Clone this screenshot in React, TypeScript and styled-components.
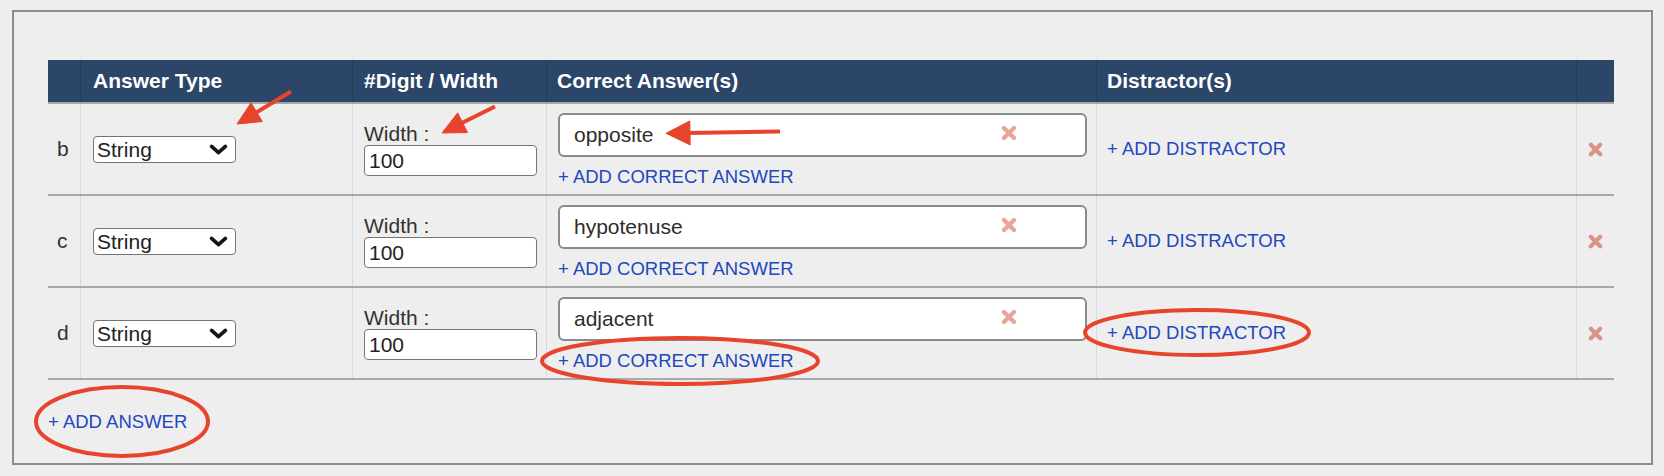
import React from 'react'
import styled, { createGlobalStyle } from 'styled-components'

type Answer = {
  id: string;
  label: string;
  type: string;
  width: string;
  correct: string[];
}

const answers: Answer[] = [
  { id: 'b', label: 'b', type: 'String', width: '100', correct: ['opposite'] },
  { id: 'c', label: 'c', type: 'String', width: '100', correct: ['hypotenuse'] },
  { id: 'd', label: 'd', type: 'String', width: '100', correct: ['adjacent'] },
]

const COLS = '33px 272px 194px 550px 480px 37px'
const MARK = '#e8432b'

const GlobalStyle = createGlobalStyle`
  html, body {
    margin: 0;
    padding: 0;
    background: #eeeeee;
  }
  body {
    font-family: "Liberation Sans", Arial, Helvetica, sans-serif;
    color: #333;
  }
  * {
    box-sizing: border-box;
  }
`

const Page = styled.div`
  position: relative;
  width: 1664px;
  height: 476px;
  padding: 10px 11px 0 12px;
  overflow: hidden;
`

const Panel = styled.section`
  border: 2px solid #8c8c8c;
  background: #eeeeee;
  padding: 48px 37px 30px 34px;
`

const Table = styled.div`
  width: 1566px;
`

const HeaderRow = styled.div`
  display: grid;
  grid-template-columns: ${COLS};
  height: 44px;
  background: #2b4669;
  border-bottom: 2px solid #a6a6a6;
`

const HeadCell = styled.div<{ $pl?: number }>`
  display: flex;
  align-items: center;
  padding: 0 10px 0 ${props => props.$pl ?? 11}px;
  color: #ffffff;
  font-weight: bold;
  font-size: 21px;
  border-right: 1px solid rgba(0, 0, 0, 0.14);

  &:last-child {
    border-right: none;
  }
`

const BodyRow = styled.div`
  display: grid;
  grid-template-columns: ${COLS};
  height: 92px;
  border-bottom: 2px solid #a9a9a9;
`

const Cell = styled.div<{ $top?: boolean; $center?: boolean; $pl?: number }>`
  display: flex;
  flex-direction: column;
  justify-content: ${props => (props.$top ? 'flex-start' : 'center')};
  align-items: ${props => (props.$center ? 'center' : 'flex-start')};
  padding: ${props => (props.$top ? '9px' : '0')} 9px 0 ${props => props.$pl ?? 11}px;
  border-right: 1px solid #d9d9de;
  font-size: 21px;

  &:last-child {
    border-right: none;
    padding: 0;
  }
`

const SelectWrap = styled.div`
  position: relative;
  width: 143px;
  height: 27px;
  margin-left: 1px;
`

const TypeSelect = styled.select`
  appearance: none;
  -webkit-appearance: none;
  width: 100%;
  height: 100%;
  margin: 0;
  padding: 0 0 0 3px;
  border: 1.5px solid #747474;
  border-radius: 4px;
  background: #ffffff;
  font-family: "Liberation Sans", Arial, sans-serif;
  font-size: 21px;
  color: #222;
`

const Chevron = styled.svg`
  position: absolute;
  right: 8px;
  top: 8px;
  pointer-events: none;
`

const FieldLabel = styled.div`
  font-size: 21px;
  line-height: 23px;
  color: #333;
`

const WidthField = styled.input`
  width: 173px;
  height: 31px;
  margin: 0;
  padding: 0 4px;
  border: 1.5px solid #767676;
  border-radius: 4px;
  background: #ffffff;
  font-family: "Liberation Sans", Arial, sans-serif;
  font-size: 21px;
  color: #222;
`

const AnswerBox = styled.div`
  position: relative;
  width: 100%;
`

const AnswerField = styled.input`
  display: block;
  width: 100%;
  height: 44px;
  margin: 0;
  padding: 0 60px 0 14px;
  border: 2px solid #8a8a8a;
  border-radius: 6px;
  background: #ffffff;
  font-family: "Liberation Sans", Arial, sans-serif;
  font-size: 21px;
  color: #2d2d2d;
`

const FieldRemove = styled.span`
  position: absolute;
  right: 70px;
  top: 12px;
  display: flex;
`

const AddLink = styled.a<{ $gap?: number }>`
  display: inline-block;
  margin-top: ${props => props.$gap ?? 0}px;
  color: #2347bd;
  font-size: 18.5px;
  line-height: 22px;
  text-decoration: none;
  cursor: pointer;
  white-space: nowrap;
`

const Footer = styled.div`
  margin-top: 31px;
  padding-left: 0;
`

const Overlay = styled.svg`
  position: absolute;
  left: 0;
  top: 0;
  pointer-events: none;
`

const Cross = ({ color, size = 16 }: { color: string; size?: number }) => (
  <svg width={size} height={size} viewBox="0 0 16 16">
    <path d="M3 3 L13 13 M13 3 L3 13" stroke={color} strokeWidth="4.4" strokeLinecap="round" />
  </svg>
)

type ArrowProps = {
  from: [number, number];
  to: [number, number];
  head?: number;
  half?: number;
}

const Arrow = ({ from, to, head = 23, half = 11 }: ArrowProps) => {
  const dx = to[0] - from[0]
  const dy = to[1] - from[1]
  const len = Math.hypot(dx, dy)
  const ux = dx / len
  const uy = dy / len
  const bx = to[0] - ux * head
  const by = to[1] - uy * head
  const px = -uy
  const py = ux
  const points = [
    `${to[0]},${to[1]}`,
    `${bx + px * half},${by + py * half}`,
    `${bx - px * half},${by - py * half}`,
  ].join(' ')
  return (
    <g fill={MARK} stroke={MARK}>
      <line x1={from[0]} y1={from[1]} x2={bx + ux * 3} y2={by + uy * 3} strokeWidth="4" />
      <polygon points={points} strokeWidth="1" strokeLinejoin="round" />
    </g>
  )
}

const App = () => {
  return (
    <>
      <GlobalStyle />
      <Page>
        <Panel>
          <Table>
            <HeaderRow>
              <HeadCell />
              <HeadCell $pl={12}>Answer Type</HeadCell>
              <HeadCell>#Digit / Width</HeadCell>
              <HeadCell $pl={10}>Correct Answer(s)</HeadCell>
              <HeadCell $pl={10}>Distractor(s)</HeadCell>
              <HeadCell />
            </HeaderRow>
            {answers.map(item => (
              <BodyRow key={item.id}>
                <Cell $pl={9}>{item.label}</Cell>
                <Cell>
                  <SelectWrap>
                    <TypeSelect defaultValue={item.type}>
                      <option>String</option>
                      <option>Number</option>
                      <option>Expression</option>
                    </TypeSelect>
                    <Chevron width="19" height="11" viewBox="0 0 19 11">
                      <path d="M2.6 2.4 L9.5 8.6 L16.4 2.4" fill="none" stroke="#141414" strokeWidth="3.6" strokeLinecap="round" strokeLinejoin="round" />
                    </Chevron>
                  </SelectWrap>
                </Cell>
                <Cell>
                  <FieldLabel>Width :</FieldLabel>
                  <WidthField defaultValue={item.width} />
                </Cell>
                <Cell $top>
                  {item.correct.map(value => (
                    <AnswerBox key={value}>
                      <AnswerField defaultValue={value} />
                      <FieldRemove>
                        <Cross color="#e8a59b" />
                      </FieldRemove>
                    </AnswerBox>
                  ))}
                  <AddLink $gap={9}>+ ADD CORRECT ANSWER</AddLink>
                </Cell>
                <Cell $pl={10}>
                  <AddLink>+ ADD DISTRACTOR</AddLink>
                </Cell>
                <Cell $center>
                  <Cross color="#db9388" size={15} />
                </Cell>
              </BodyRow>
            ))}
          </Table>
          <Footer>
            <AddLink>+ ADD ANSWER</AddLink>
          </Footer>
        </Panel>

        <Overlay width="1664" height="476" viewBox="0 0 1664 476">
          <Arrow from={[291, 91.5]} to={[237, 124]} />
          <Arrow from={[495, 106.5]} to={[442, 133]} />
          <Arrow from={[780, 131.5]} to={[666, 133.3]} head={24} half={12} />
          <g fill="none" stroke={MARK} strokeWidth="4">
            <ellipse cx="680" cy="361" rx="138" ry="23" />
            <ellipse cx="1197" cy="332.5" rx="112" ry="22.5" />
            <ellipse cx="122" cy="421.5" rx="86" ry="34.5" />
          </g>
        </Overlay>
      </Page>
    </>
  )
}

export default App
